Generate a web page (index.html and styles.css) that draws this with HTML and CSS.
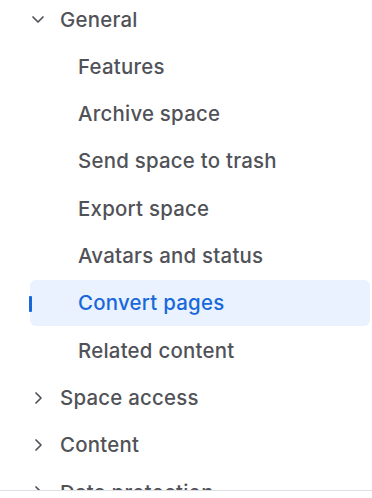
FILE: index.html
```html
<!DOCTYPE html>
<html lang="en">

<head>
  <meta charset="utf-8">
  <title>Space settings</title>
  <link rel="stylesheet" href="styles.css">
</head>

<body>
  <nav class="sideNav">
    <ul class="navList">
      <li class="navGroup">
        <div class="navRow">
          <svg class="chevron" width="16" height="16" viewBox="0 0 16 16">
            <path d="M3 6 L8 11 L13 6" fill="none" stroke="currentColor" stroke-width="1.7" stroke-linecap="round" stroke-linejoin="round" />
          </svg>
          <span>General</span>
        </div>
        <ul class="subList">
          <li class="navRow sub">Features</li>
          <li class="navRow sub">Archive space</li>
          <li class="navRow sub">Send space to trash</li>
          <li class="navRow sub">Export space</li>
          <li class="navRow sub">Avatars and status</li>
          <li class="navRow sub selected">Convert pages</li>
          <li class="navRow sub">Related content</li>
        </ul>
      </li>
      <li class="navRow">
        <svg class="chevron" width="16" height="16" viewBox="0 0 16 16">
          <path d="M6 3 L11 8 L6 13" fill="none" stroke="currentColor" stroke-width="1.7" stroke-linecap="round" stroke-linejoin="round" />
        </svg>
        <span>Space access</span>
      </li>
      <li class="navRow">
        <svg class="chevron" width="16" height="16" viewBox="0 0 16 16">
          <path d="M6 3 L11 8 L6 13" fill="none" stroke="currentColor" stroke-width="1.7" stroke-linecap="round" stroke-linejoin="round" />
        </svg>
        <span>Content</span>
      </li>
      <li class="navRow">
        <svg class="chevron" width="16" height="16" viewBox="0 0 16 16">
          <path d="M6 3 L11 8 L6 13" fill="none" stroke="currentColor" stroke-width="1.7" stroke-linecap="round" stroke-linejoin="round" />
        </svg>
        <span>Data protection</span>
      </li>
    </ul>
  </nav>
</body>

</html>
```

FILE: styles.css
```css
body {
  background-color: white;
  font-family: Inter, 'Noto Sans', sans-serif;
  margin: 0;
  padding: 0;
}

.sideNav {
  border-bottom: 1px solid #dcdfe4;
  height: 490px;
  overflow: hidden;
}

.navList,
.subList {
  display: flex;
  flex-direction: column;
  gap: 1.33px;
  list-style: none;
  margin: 0;
  padding: 0;
}

.navList {
  margin-top: -4px;
  padding: 0 2px 0 30px;
}

.navGroup {
  display: flex;
  flex-direction: column;
  gap: 1.33px;
}

.navRow {
  align-items: center;
  border-radius: 6px;
  color: #505258;
  display: flex;
  font-size: 20.4px;
  font-weight: 500;
  gap: 14px;
  height: 46px;
  letter-spacing: 0.25px;
  position: relative;
}

.chevron {
  color: #505258;
  flex: none;
}

.sub {
  padding-left: 48px;
}

.selected {
  background-color: #e9f2fe;
  color: #1868db;
}

.selected::before {
  background-color: #1868db;
  border-radius: 1px;
  content: "";
  height: 16px;
  left: -1px;
  position: absolute;
  top: 16px;
  width: 3px;
}
```
